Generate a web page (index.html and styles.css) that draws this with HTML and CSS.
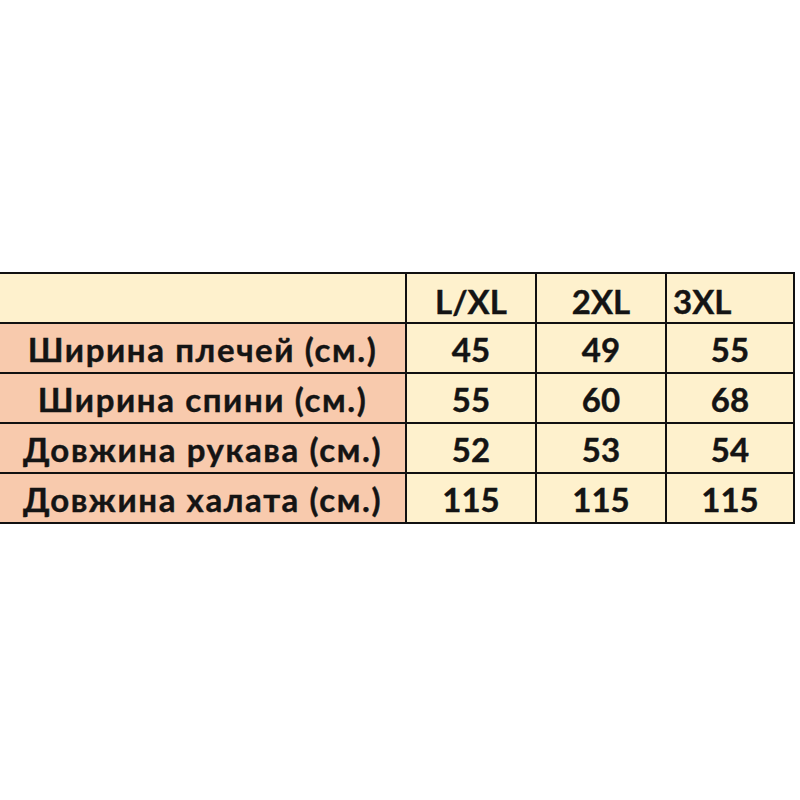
FILE: index.html
```html
<!DOCTYPE html>
<html lang="uk">
<head>
<meta charset="utf-8">
<title>Розмірна сітка</title>
<link rel="stylesheet" href="styles.css">
</head>
<body>
<div class="page">
  <div class="sizes">
    <div class="cell head label"></div>
    <div class="cell head">L/XL</div>
    <div class="cell head">2XL</div>
    <div class="cell head left">3XL</div>

    <div class="cell label">Ширина плечей (см.)</div>
    <div class="cell">45</div>
    <div class="cell">49</div>
    <div class="cell">55</div>

    <div class="cell label">Ширина спини (см.)</div>
    <div class="cell">55</div>
    <div class="cell">60</div>
    <div class="cell">68</div>

    <div class="cell label">Довжина рукава (см.)</div>
    <div class="cell">52</div>
    <div class="cell">53</div>
    <div class="cell">54</div>

    <div class="cell label">Довжина халата (см.)</div>
    <div class="cell">115</div>
    <div class="cell">115</div>
    <div class="cell">115</div>
  </div>
</div>
</body>
</html>
```
FILE: styles.css
```css
html, body {
  margin: 0;
  padding: 0;
  background: #ffffff;
}
.page {
  width: 800px;
  height: 800px;
  padding-top: 272px;
  box-sizing: border-box;
  overflow: hidden;
}
.sizes {
  display: grid;
  grid-template-columns: 407px 130px 130px 128px;
  grid-auto-rows: 50px;
  width: 795px;
  border-top: 2px solid #111111;
  font-family: "Lato", "Open Sans", sans-serif;
  font-weight: 700;
  font-size: 33px;
  color: #141414;
  -webkit-text-stroke: 0.4px #141414;
}
.cell {
  box-sizing: border-box;
  border-right: 2px solid #111111;
  border-bottom: 2px solid #111111;
  background: #fef1cd;
  display: flex;
  align-items: flex-end;
  justify-content: center;
  padding-bottom: 6px;
  line-height: 1;
  white-space: nowrap;
}
.label {
  background: #f8caad;
  letter-spacing: 1.6px;
}
.head {
  background: #fef1cd;
  padding-bottom: 4px;
}
.left {
  justify-content: flex-start;
  padding-left: 6px;
}
```
